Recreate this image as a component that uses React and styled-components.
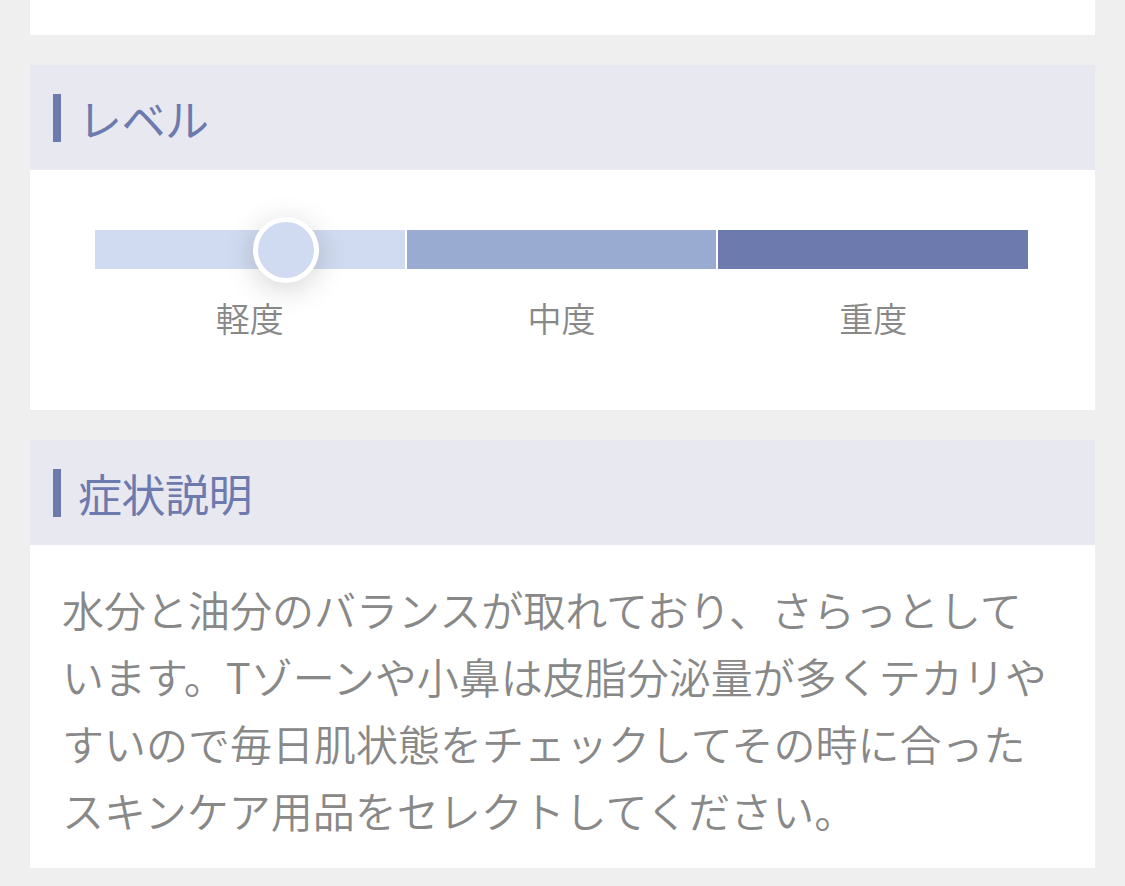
import React from "react";
import styled, { createGlobalStyle } from "styled-components";

const GlobalStyle = createGlobalStyle`
  html, body {
    margin: 0;
    padding: 0;
    background: #efefef;
  }
  body {
    font-family: "Noto Sans CJK JP", "Noto Sans", sans-serif;
  }
`;

const Page = styled.div`
  padding: 0 30px 18px;
  display: flex;
  flex-direction: column;
  gap: 30px;
`;

const TopCard = styled.div`
  height: 35px;
  background: #fff;
`;

const Section = styled.section`
  background: #fff;
`;

const Header = styled.div`
  height: 105px;
  background: #e8e8f1;
  display: flex;
  align-items: center;
  padding-left: 23px;
  gap: 17px;
`;

const Accent = styled.span`
  width: 8px;
  height: 48px;
  background: #6d7aad;
`;

const Title = styled.h2`
  margin: 0;
  font-size: 44px;
  font-weight: 400;
  color: #6d7aad;
  line-height: 1;
  letter-spacing: -0.5px;
`;

const LevelBody = styled.div`
  height: 240px;
  box-sizing: border-box;
  padding: 60px 67px 0 65px;
`;

const Track = styled.div`
  position: relative;
  display: grid;
  grid-template-columns: repeat(3, 1fr);
  gap: 2px;
  height: 39px;
`;

const Segment = styled.div`
  background: ${(p) => p.$color};
`;

const Knob = styled.div`
  position: absolute;
  top: 50%;
  width: 66px;
  height: 66px;
  box-sizing: border-box;
  border-radius: 50%;
  border: 5px solid #fff;
  background: #d0daf0;
  transform: translate(-50%, -50%);
  box-shadow: 0 6px 30px rgba(0, 0, 0, 0.17);
`;

const Labels = styled.div`
  display: grid;
  grid-template-columns: repeat(3, 1fr);
  gap: 2px;
  margin-top: 32px;
`;

const Label = styled.div`
  text-align: center;
  font-size: 34px;
  font-weight: 350;
  line-height: 1;
  color: #888;
`;

const Description = styled.p`
  margin: 0;
  padding: 30px 32px 25px;
  font-size: 42px;
  font-weight: 350;
  line-height: 67px;
  color: #888;
`;

const levels = [
  { name: "軽度", color: "#d0daf0" },
  { name: "中度", color: "#9aabd2" },
  { name: "重度", color: "#6d7aad" },
];

const SectionHeader = ({ title }) => (
  <Header>
    <Accent />
    <Title>{title}</Title>
  </Header>
);

export default function App() {
  const knobPos = 20.5;
  return (
    <>
      <GlobalStyle />
      <Page>
        <TopCard />
        <Section>
          <SectionHeader title="レベル" />
          <LevelBody>
            <Track>
              {levels.map((l) => (
                <Segment key={l.name} $color={l.color} />
              ))}
              <Knob style={{ left: `${knobPos}%` }} />
            </Track>
            <Labels>
              {levels.map((l) => (
                <Label key={l.name}>{l.name}</Label>
              ))}
            </Labels>
          </LevelBody>
        </Section>
        <Section>
          <SectionHeader title="症状説明" />
          <Description>
            水分と油分のバランスが取れており、さらっとしています。Tゾーンや小鼻は皮脂分泌量が多くテカリやすいので毎日肌状態をチェックしてその時に合ったスキンケア用品をセレクトしてください。
          </Description>
        </Section>
      </Page>
    </>
  );
}
